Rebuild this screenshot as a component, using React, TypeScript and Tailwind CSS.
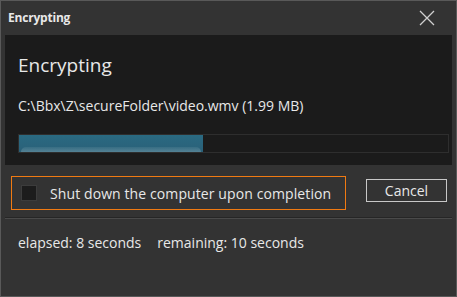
import React from 'react';

// Encrypting progress dialog, dark theme
export default function App() {
  const percent = 185 / 431;

  return (
    <div
      className="w-[457px] h-[297px] bg-[#333333] border border-[#595959] flex flex-col text-[#e8e8e8]"
      style={{ fontFamily: '"Open Sans", "Noto Sans", Arial, sans-serif' }}
    >
      {/* title bar */}
      <div className="h-[34px] shrink-0 flex items-center justify-between pl-[7px] pr-[21px]">
        <span className="text-[12px] font-bold tracking-[-0.2px]">Encrypting</span>
        <svg width="16" height="16" viewBox="0 0 16 16" className="text-[#d0d0d0]">
          <path d="M1 1 L15 15 M15 1 L1 15" stroke="currentColor" strokeWidth="1.3" fill="none" />
        </svg>
      </div>

      {/* main panel */}
      <div className="mx-[4px] h-[130px] shrink-0 bg-[#1b1b1b] flex flex-col pl-[13px] pr-[3px]">
        <div className="mt-[17px] text-[19px] leading-[26px]">Encrypting</div>
        <div className="mt-[18px] text-[14px] leading-[20px]">
          C:\Bbx\Z\secureFolder\video.wmv (1.99 MB)
        </div>
        <div className="mt-[18px] h-[19px] shrink-0 border border-[#2e2e2e] bg-[#1b1b1b]">
          <div
            className="h-full bg-gradient-to-b from-[#2a6a82] to-[#2a6078] relative overflow-hidden"
            style={{ width: `${percent * 100}%` }}
          >
            <div className="absolute left-[2px] right-[2px] bottom-0 h-[5px] rounded-t-[6px] bg-gradient-to-b from-[#3a7085] to-[#5f8b9c] opacity-80" />
          </div>
        </div>
      </div>

      {/* options row */}
      <div className="flex items-start pt-[11px] pl-[10px] pr-[9px] h-[52px] shrink-0">
        <label className="w-[335px] h-[34px] border border-[#f07a12] flex items-center pl-[9px] gap-[13px]">
          <span className="w-[16px] h-[16px] bg-[#1c1c1c] border border-[#3c3c3c]" />
          <span className="text-[14px] tracking-[0.1px]">Shut down the computer upon completion</span>
        </label>
        <button className="ml-auto mt-[3px] w-[81px] h-[23px] border border-[#c8c8c8] text-[14px] leading-[20px] text-[#e8e8e8]">
          Cancel
        </button>
      </div>

      {/* separator */}
      <div className="mx-[4px] h-[2px] border-t border-[#262626] border-b border-b-[#4a4a4a]" />

      {/* status */}
      <div className="pl-[17px] pt-[13px] text-[14px] flex gap-[16px]">
        <span>elapsed: 8 seconds</span>
        <span>remaining: 10 seconds</span>
      </div>
    </div>
  );
}
